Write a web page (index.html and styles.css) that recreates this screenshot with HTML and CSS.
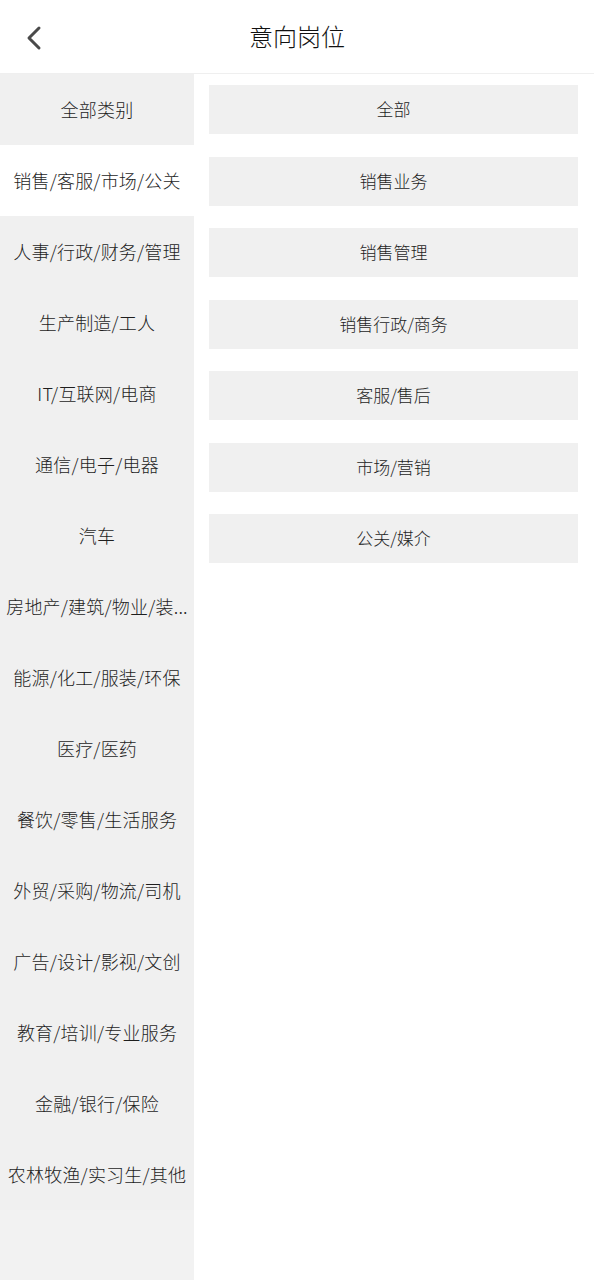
FILE: index.html
```html
<!DOCTYPE html>
<html lang="zh">
<head>
<meta charset="utf-8">
<link rel="stylesheet" href="styles.css">
</head>
<body>
<div class="page">
  <header class="header">
    <span class="back">
      <svg width="20" height="26" viewBox="0 0 20 26"><path d="M15 3 L5 13 L15 23" fill="none" stroke="#4a4a4a" stroke-width="3" stroke-linecap="round" stroke-linejoin="round"/></svg>
    </span>
    <h1 class="title">意向岗位</h1>
  </header>
  <div class="main">
    <ul class="cats">
      <li>全部类别</li>
      <li class="active">销售/客服/市场/公关</li>
      <li>人事/行政/财务/管理</li>
      <li>生产制造/工人</li>
      <li>IT/互联网/电商</li>
      <li>通信/电子/电器</li>
      <li>汽车</li>
      <li>房地产/建筑/物业/装...</li>
      <li>能源/化工/服装/环保</li>
      <li>医疗/医药</li>
      <li>餐饮/零售/生活服务</li>
      <li>外贸/采购/物流/司机</li>
      <li>广告/设计/影视/文创</li>
      <li>教育/培训/专业服务</li>
      <li>金融/银行/保险</li>
      <li>农林牧渔/实习生/其他</li>
    </ul>
    <ul class="jobs">
      <li>全部</li>
      <li>销售业务</li>
      <li>销售管理</li>
      <li>销售行政/商务</li>
      <li>客服/售后</li>
      <li>市场/营销</li>
      <li>公关/媒介</li>
    </ul>
  </div>
</div>
</body>
</html>
```
FILE: styles.css
```css
* { box-sizing: border-box; }
html, body { margin: 0; padding: 0; background: #fff; }
body {
  font-family: "Noto Sans CJK SC", "Noto Sans", sans-serif;
  color: #1e1e1e;
  font-weight: 300;
}
.page { width: 594px; height: 1280px; display: flex; flex-direction: column; }
.header {
  height: 74px;
  flex: none;
  border-bottom: 1px solid #efefef;
  display: flex;
  align-items: center;
  justify-content: center;
  position: relative;
  padding-bottom: 2px;
}
.back { position: absolute; left: 24px; top: 25px; display: block; line-height: 0; }
.title { margin: 0; font-size: 24px; font-weight: 300; color: #111; }
.main { flex: 1; display: flex; }
.cats {
  list-style: none; margin: 0; padding: 0;
  width: 194px; flex: none;
  background: #f2f2f2;
}
.cats li {
  height: 71px;
  display: flex; align-items: center; justify-content: center;
  font-size: 18px;
  letter-spacing: 0.2px;
  background: #f0f0f0;
  white-space: nowrap;
  padding-bottom: 2px;
}
.cats li.active { background: #fff; }
.jobs {
  list-style: none; margin: 0; padding: 11px 16px 0 15px;
  flex: 1;
  display: flex; flex-direction: column; gap: 22.5px;
}
.jobs li {
  height: 49px;
  background: #f0f0f0;
  display: flex; align-items: center; justify-content: center;
  font-size: 17px;
  padding-bottom: 2px;
}
```
